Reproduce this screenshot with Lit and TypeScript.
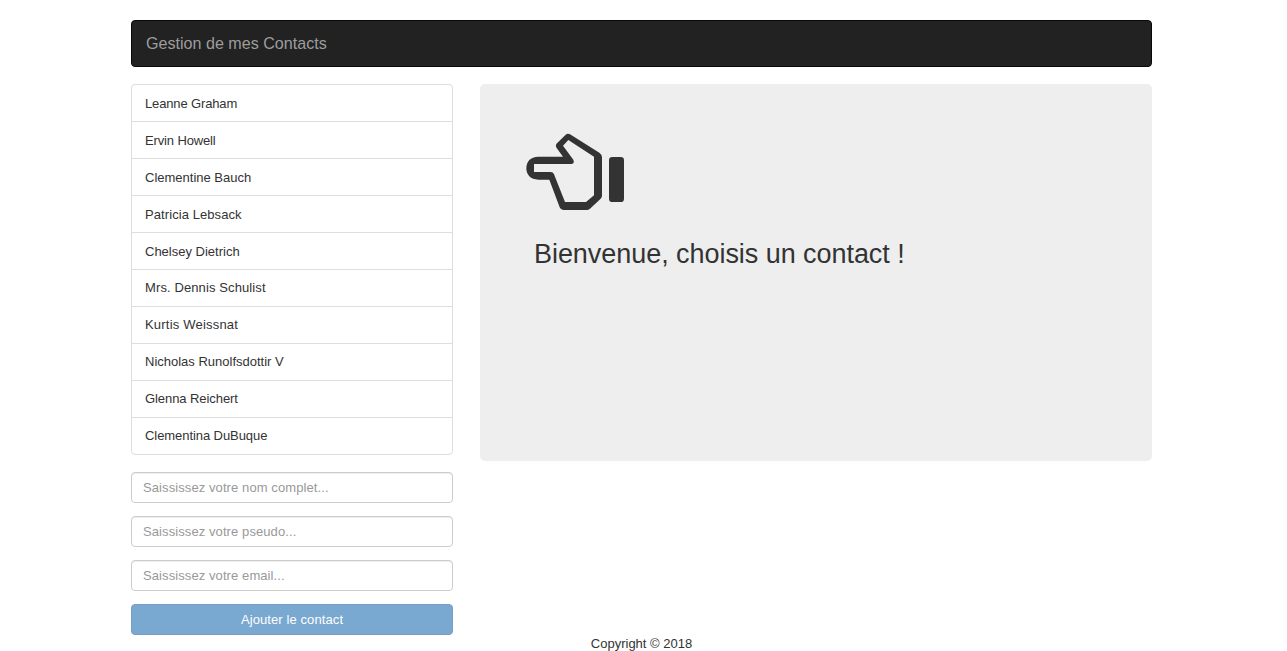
import { LitElement, html, css } from "lit";
import { customElement, state } from "lit/decorators.js";

@customElement("app-root")
export class AppRoot extends LitElement {
  static styles = css`
    :host {
      display: block;
      height: 651px;
      overflow: hidden;
      background: #fff;
      color: #333;
      font: 13px/18px "Liberation Sans", Arial, sans-serif;
    }
    * { box-sizing: border-box; }
    .container { width: 1021px; margin-left: 131px; padding-top: 20px; }
    .navbar {
      display: flex;
      align-items: center;
      height: 47px;
      padding: 0 14px 2px;
      margin-bottom: 17px;
      background: #222;
      border: 1px solid #080808;
      border-radius: 4px;
      color: #9d9d9d;
      font-size: 16.1px;
    }
    .row { display: grid; grid-template-columns: 322px 672px; column-gap: 27px; align-items: start; }
    .list {
      list-style: none;
      margin: 0 0 17px;
      padding: 0;
      border: 1px solid #ddd;
      border-radius: 4px;
    }
    .item { height: 37px; padding: 10px 13px 0 13px; border-bottom: 1px solid #ddd; }
    .item:nth-child(n + 6) { padding-top: 9px; }
    .item:nth-child(-n + 2) { letter-spacing: -0.14px; }
    .item:nth-child(4) { letter-spacing: 0.08px; }
    .item:nth-child(6) { letter-spacing: 0.11px; }
    .item:nth-child(7) { letter-spacing: 0.2px; }
    .item:nth-child(n + 9) { letter-spacing: -0.07px; }
    .item:last-child { height: 36px; border-bottom: 0; }
    .form { display: flex; flex-direction: column; gap: 13px; }
    .field {
      display: block;
      width: 100%;
      height: 31px;
      margin: 0;
      padding: 5px 11px;
      border: 1px solid #ccc;
      border-radius: 4px;
      box-shadow: inset 0 1px 1px rgba(0, 0, 0, 0.075);
      background: #fff;
      color: #555;
      font: inherit;
      letter-spacing: 0.09px;
      outline: none;
    }
    .field::placeholder { color: #999; opacity: 1; }
    .submit {
      height: 31px;
      padding: 0;
      border: 1px solid #2e6da4;
      border-radius: 4px;
      background: #337ab7;
      color: #fff;
      font: inherit;
      letter-spacing: 0.1px;
      opacity: 0.65;
    }
    .jumbotron { height: 377px; padding: 49px 46px 0; background: #eee; border-radius: 5px; }
    .hand { display: block; width: 100px; height: 78px; fill: #333; }
    .welcome { margin: 25px 0 0 8px; font-size: 27px; line-height: 36px; font-weight: 400; letter-spacing: -0.05px; }
    .footer { text-align: center; }
  `;

  @state() private contacts = [
    "Leanne Graham",
    "Ervin Howell",
    "Clementine Bauch",
    "Patricia Lebsack",
    "Chelsey Dietrich",
    "Mrs. Dennis Schulist",
    "Kurtis Weissnat",
    "Nicholas Runolfsdottir V",
    "Glenna Reichert",
    "Clementina DuBuque",
  ];

  private fields = ["nom complet", "pseudo", "email"];

  render() {
    return html`
      <div class="container">
        <nav class="navbar">Gestion de mes Contacts</nav>
        <div class="row">
          <div>
            <ul class="list">
              ${this.contacts.map((name) => html`<li class="item">${name}</li>`)}
            </ul>
            <form class="form">
              ${this.fields.map(
                (f) => html`<input class="field" type="text" placeholder="Saississez votre ${f}..." />`
              )}
              <button class="submit" type="button" disabled>Ajouter le contact</button>
            </form>
          </div>
          <section class="jumbotron">
            <svg class="hand" viewBox="33 39 300 234" aria-hidden="true">
              <path
                fill-rule="evenodd"
                d="M70 110H144L125 84Q120 76 126 70L152 44Q158 39 165 43L253 98Q261 103 261 111V227Q261 232 257 236L225 266Q221 270 215 270H145Q137 270 134 262L103 179H70C46 179 34 164 34 145C34 125 46 110 70 110ZM57 132H168Q180 131 175 119L144 77L160 60L237 110V226L213 246H150L117 163Q114 156 107 156H57Z"
              />
              <rect x="282" y="111" width="45" height="135" rx="10" />
            </svg>
            <h2 class="welcome">Bienvenue, choisis un contact !</h2>
          </section>
        </div>
        <footer class="footer">Copyright © 2018</footer>
      </div>
    `;
  }
}
